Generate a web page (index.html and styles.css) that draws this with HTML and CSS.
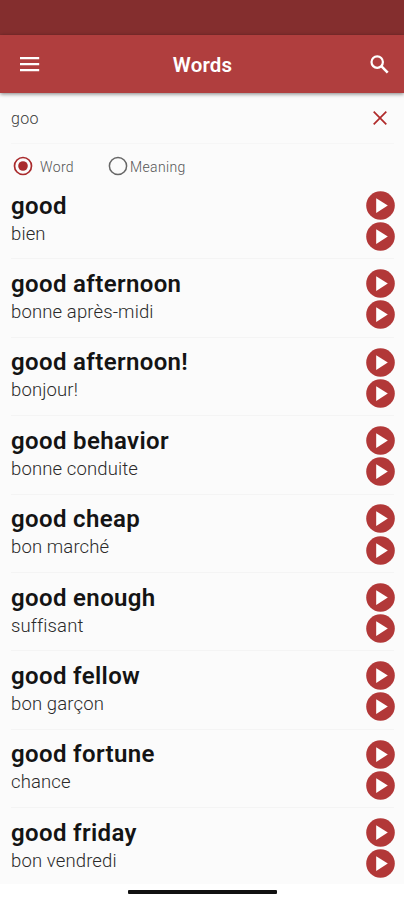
FILE: index.html
```
<!DOCTYPE html>
<html lang="en">
<head>
<meta charset="utf-8">
<title>Words</title>
<link rel="stylesheet" href="styles.css">
</head>
<body>
<svg width="0" height="0" class="defs">
  <symbol id="play" viewBox="0 0 29 29"><circle cx="14.5" cy="14.5" r="14.3" fill="#b23838"/><path d="M10.2 7.2v14.8l11.6-7.4z" fill="#fff"/></symbol>
</svg>
<div class="status"></div>
<header class="bar">
  <svg class="menu" width="20" height="16" viewBox="0 0 20 16"><path d="M0 2.2h19.2M0 8.2h19.2M0 14.2h19.2" stroke="#fff" stroke-width="2.2"/></svg>
  <h1>Words</h1>
  <svg class="find" width="19" height="19" viewBox="0 0 19 19" fill="none" stroke="#fff"><circle cx="7.2" cy="7.1" r="5.7" stroke-width="2.2"/><path d="M11.3 11.2l6.4 6.4" stroke-width="2.6"/></svg>
</header>
<div class="search">
  <span>goo</span>
  <svg width="14" height="14" viewBox="0 0 14 14"><path d="M.7.7l12.6 12.6M13.3.7L.7 13.3" stroke="#b02a2a" stroke-width="1.7"/></svg>
</div>
<div class="modes">
  <svg width="20" height="20" viewBox="0 0 20 20" fill="none"><circle cx="10" cy="10" r="8.5" stroke="#a92a2c" stroke-width="1.7"/><circle cx="10" cy="10" r="4.8" fill="#a92a2c"/></svg>
  <span class="word">Word</span>
  <svg width="20" height="20" viewBox="0 0 20 20" fill="none"><circle cx="10" cy="10" r="8.6" stroke="#666" stroke-width="1.5"/></svg>
  <span class="meaning">Meaning</span>
</div>
<main class="list">
  <div class="row"><div class="text"><b>good</b><span>bien</span></div><div class="plays"><svg><use href="#play"/></svg><svg><use href="#play"/></svg></div></div>
  <div class="row"><div class="text"><b>good afternoon</b><span>bonne après-midi</span></div><div class="plays"><svg><use href="#play"/></svg><svg><use href="#play"/></svg></div></div>
  <div class="row"><div class="text"><b>good afternoon!</b><span>bonjour!</span></div><div class="plays"><svg><use href="#play"/></svg><svg><use href="#play"/></svg></div></div>
  <div class="row"><div class="text"><b>good behavior</b><span>bonne conduite</span></div><div class="plays"><svg><use href="#play"/></svg><svg><use href="#play"/></svg></div></div>
  <div class="row"><div class="text"><b>good cheap</b><span>bon marché</span></div><div class="plays"><svg><use href="#play"/></svg><svg><use href="#play"/></svg></div></div>
  <div class="row"><div class="text"><b>good enough</b><span>suffisant</span></div><div class="plays"><svg><use href="#play"/></svg><svg><use href="#play"/></svg></div></div>
  <div class="row"><div class="text"><b>good fellow</b><span>bon garçon</span></div><div class="plays"><svg><use href="#play"/></svg><svg><use href="#play"/></svg></div></div>
  <div class="row"><div class="text"><b>good fortune</b><span>chance</span></div><div class="plays"><svg><use href="#play"/></svg><svg><use href="#play"/></svg></div></div>
  <div class="row"><div class="text"><b>good friday</b><span>bon vendredi</span></div><div class="plays"><svg><use href="#play"/></svg><svg><use href="#play"/></svg></div></div>
</main>
<footer class="nav"><div class="pill"></div></footer>
</body>
</html>
```
FILE: styles.css
```
* { box-sizing: border-box; }
body { margin: 0; height: 900px; overflow: hidden; display: flex; flex-direction: column; background: #fbfbfb; font-family: Roboto, sans-serif; color: #141414; }
svg { display: block; flex: none; }
.defs { position: absolute; }
.status { height: 35px; flex: none; background: #842e2e; }
.bar { height: 58px; flex: none; display: grid; grid-template-columns: 60px 1fr 60px; align-items: center; padding: 0 15px 0 20px; background: #b03e3e; box-shadow: 0 1px 4px rgba(0,0,0,.5); }
.bar h1 { margin: 2px 4px 0 0; text-align: center; font-size: 20.5px; font-weight: 600; letter-spacing: .15px; line-height: 24px; color: #fff; }
.find { justify-self: end; }
.search { height: 51px; flex: none; margin: 0 10px 0 11px; padding-right: 7px; border-bottom: 1px solid #f6f6f6; display: flex; align-items: center; justify-content: space-between; font-size: 16px; letter-spacing: .3px; font-weight: 350; color: #3c3c3c; }
.modes { height: 37px; flex: none; display: flex; align-items: center; padding: 7px 0 0 13px; font-size: 14px; letter-spacing: .35px; font-weight: 350; color: #555; }
.word { margin: 1px 0 0 7px; width: 68px; }
.meaning { margin: 1px 0 0 2px; }
.list { height: 703px; flex: none; overflow: hidden; }
.row { height: 78.4px; margin: 0 10px 0 11px; padding-top: 9.8px; display: flex; justify-content: space-between; border-bottom: 1px solid #f4f4f4; }
.row:last-child { border: 0; }
.text { display: flex; flex-direction: column; padding-top: .8px; }
.text b { font-size: 24px; font-weight: 600; line-height: 28px; letter-spacing: .36px; }
.text span { font-size: 18.5px; font-weight: 300; line-height: 29px; letter-spacing: .13px; color: #2a2a2a; }
.plays { display: flex; flex-direction: column; gap: 2.3px; margin-right: -.5px; }
.plays svg { width: 29px; height: 29px; }
.nav { flex: 1; background: #fff; display: flex; justify-content: center; padding-top: 6px; }
.pill { width: 149px; height: 4px; border-radius: 1px; background: #111; }
```
